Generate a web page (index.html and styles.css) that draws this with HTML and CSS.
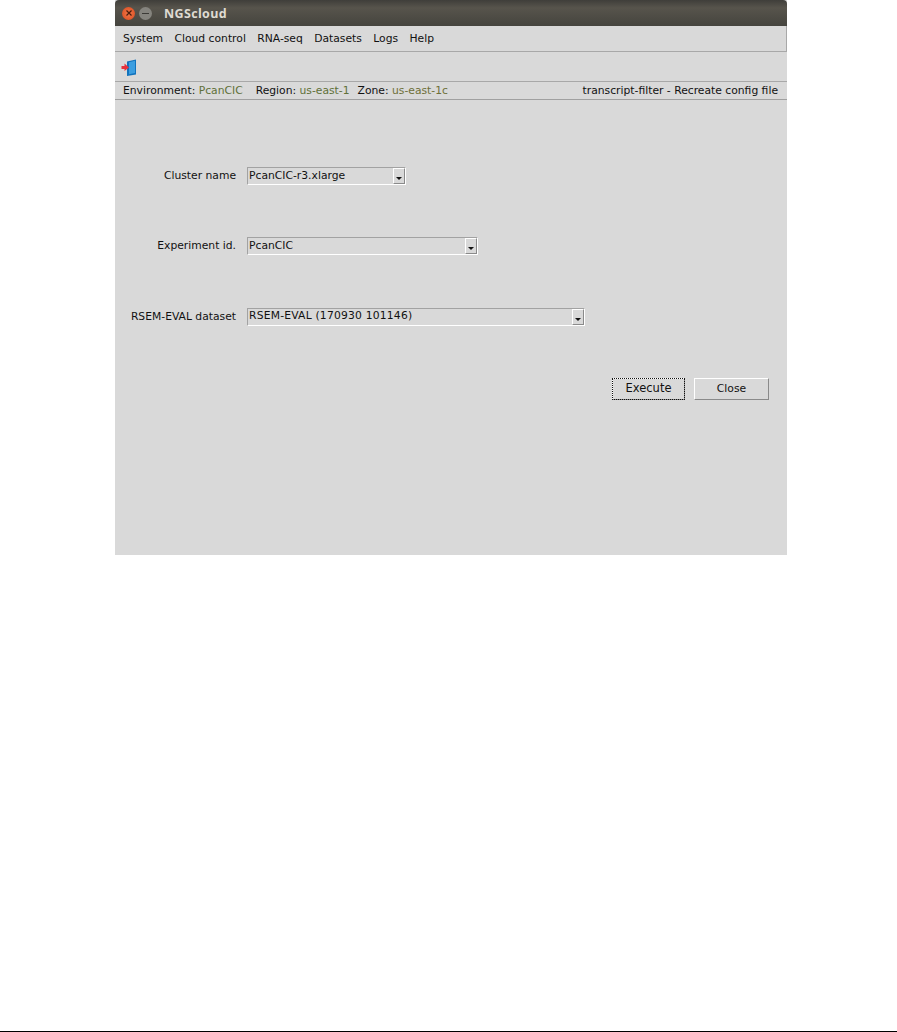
FILE: index.html
```html
<!DOCTYPE html>
<html lang="en">
<head>
  <meta charset="UTF-8">
  <title>NGScloud</title>
  <link rel="stylesheet" href="styles.css">
</head>
<body>
  <div class="window">
    <div class="titlebar">
      <span class="win-btn win-close">
        <svg width="6" height="6" viewBox="0 0 6 6"><path d="M0.5 0.5L5.5 5.5M5.5 0.5L0.5 5.5" stroke="#4a1c0c" stroke-width="1.2"/></svg>
      </span>
      <span class="win-btn win-min"><span class="min-bar"></span></span>
      <span class="win-title">NGScloud</span>
    </div>

    <div class="menubar">
      <span>System</span>
      <span>Cloud control</span>
      <span>RNA-seq</span>
      <span>Datasets</span>
      <span>Logs</span>
      <span>Help</span>
    </div>

    <div class="toolbar">
      <!-- exit icon: red arrow into a blue door -->
      <svg width="16" height="17" viewBox="0 0 16 17">
        <path d="M6 2.5L15 0.5V15.5L6 17Z" fill="#1273bd"/>
        <path d="M8 3.2L14 1.8V14L8 15.2Z" fill="#3c9ee0"/>
        <path d="M0.5 7H3.5V4.5L8 8.5L3.5 12V10H0.5Z" fill="#e8323c"/>
      </svg>
    </div>

    <div class="statusbar">
      <div class="status-left">
        <span class="status-item env">Environment: <em>PcanCIC</em></span>
        <span class="status-item region">Region: <em>us-east-1</em></span>
        <span class="status-item">Zone: <em class="zone">us-east-1c</em></span>
      </div>
      <div class="status-right">transcript-filter - Recreate config file</div>
    </div>

    <div class="content">
      <div class="form-row row-cluster">
        <label>Cluster name</label>
        <div class="combo combo-sm"><span class="combo-text">PcanCIC-r3.xlarge</span><span class="combo-arrow"></span></div>
      </div>
      <div class="form-row row-experiment">
        <label>Experiment id.</label>
        <div class="combo combo-md"><span class="combo-text">PcanCIC</span><span class="combo-arrow"></span></div>
      </div>
      <div class="form-row row-dataset">
        <label>RSEM-EVAL dataset</label>
        <div class="combo combo-lg"><span class="combo-text wide">RSEM-EVAL (170930 101146)</span><span class="combo-arrow"></span></div>
      </div>
      <div class="buttons">
        <button class="btn btn-focus" type="button">Execute</button>
        <button class="btn" type="button">Close</button>
      </div>
    </div>
  </div>
  <div class="page-rule"></div>
</body>
</html>
```

FILE: styles.css
```css
body {
  margin: 0;
  height: 1032px;
  background-color: #ffffff;
  font-family: "DejaVu Sans", sans-serif;
  font-size: 10.75px;
  color: #111111;
  display: flex;
  flex-direction: column;
  overflow: hidden;
}
.window {
  width: 672px;
  height: 555px;
  margin-left: 115px;
  background-color: #d9d9d9;
  display: flex;
  flex-direction: column;
}
.titlebar {
  height: 26px;
  background: linear-gradient(#3f3e3a, #57544c 30%, #45443e);
  border-radius: 4px 4px 0 0;
  display: flex;
  align-items: center;
  padding-left: 7px;
  box-sizing: border-box;
}
.win-btn {
  width: 13px;
  height: 13px;
  border-radius: 50%;
  margin-right: 4px;
  display: flex;
  align-items: center;
  justify-content: center;
}
.win-close {
  background: radial-gradient(#f0784a, #d9481c);
}
.win-min {
  background: #85847e;
}
.min-bar {
  width: 7px;
  height: 1px;
  background-color: #3c3b37;
}
.win-title {
  margin-left: 8px;
  font-family: "Open Sans", sans-serif;
  font-weight: 700;
  font-size: 12.5px;
  letter-spacing: 0.35px;
  color: #dfdbd2;
}
.menubar {
  height: 26px;
  box-sizing: border-box;
  border-bottom: 1px solid #a8a8a8;
  border-right: 1px solid #a8a8a8;
  display: flex;
  align-items: center;
  gap: 11.4px;
  padding-left: 8px;
}
.toolbar {
  height: 30px;
  box-sizing: border-box;
  border-bottom: 1px solid #a8a8a8;
  padding: 7px 0 0 6px;
}
.toolbar svg {
  display: block;
}
.statusbar {
  height: 18px;
  box-sizing: border-box;
  border-bottom: 1px solid #a0a0a0;
  display: flex;
  justify-content: space-between;
  align-items: center;
  padding: 0 9px 0 8px;
}
.status-left {
  display: flex;
}
.status-item {
  margin-right: 8px;
}
.status-item.env {
  margin-right: 13px;
}
.status-item em {
  font-style: normal;
  color: #5f7038;
}
.status-item .zone {
  color: #6e6f38;
}
.content {
  flex: 1;
  position: relative;
  padding-top: 67px;
}
.form-row {
  display: flex;
  align-items: center;
  height: 18px;
}
.form-row label {
  width: 121px;
  margin-right: 11px;
  text-align: right;
  position: relative;
  top: -1px;
}
.row-experiment {
  margin-top: 52px;
}
.row-dataset {
  margin-top: 53px;
}
.combo {
  height: 18px;
  box-sizing: border-box;
  border-top: 1px solid #a2a2a2;
  border-left: 1px solid #a2a2a2;
  border-bottom: 1px solid #ffffff;
  border-right: 1px solid #ffffff;
  display: flex;
  align-items: center;
  justify-content: space-between;
}
.combo-sm {
  width: 159px;
}
.combo-md {
  width: 231px;
}
.combo-lg {
  width: 338px;
}
.combo-text {
  padding-left: 1px;
  padding-bottom: 2px;
}
.combo-text.wide {
  padding-bottom: 4px;
  letter-spacing: 0.2px;
}
.combo-arrow {
  width: 12px;
  height: 16px;
  box-sizing: border-box;
  border-left: 1px solid #ffffff;
  border-top: 1px solid #ffffff;
  border-right: 1px solid #8a8a8a;
  border-bottom: 1px solid #8a8a8a;
  display: flex;
  align-items: flex-end;
  justify-content: center;
  padding-bottom: 3px;
}
.combo-arrow::after {
  content: "";
  border-left: 3px solid transparent;
  border-right: 3px solid transparent;
  border-top: 3px solid #111111;
}
.buttons {
  display: flex;
  justify-content: flex-end;
  gap: 9px;
  margin-top: 52px;
  padding-right: 18px;
}
.btn {
  width: 75px;
  height: 22px;
  padding: 0 0 2px;
  box-sizing: border-box;
  background-color: #d9d9d9;
  font-family: "DejaVu Sans", sans-serif;
  font-size: 10.75px;
  color: #111111;
  border-top: 1px solid #ffffff;
  border-left: 1px solid #ffffff;
  border-bottom: 1px solid #8a8a8a;
  border-right: 1px solid #8a8a8a;
}
.btn-focus {
  width: 73px;
  font-size: 11.5px;
  outline: 1px dotted #111111;
  outline-offset: -1px;
}
.page-rule {
  height: 1px;
  margin-top: 476px;
  background-color: #000000;
}
```
